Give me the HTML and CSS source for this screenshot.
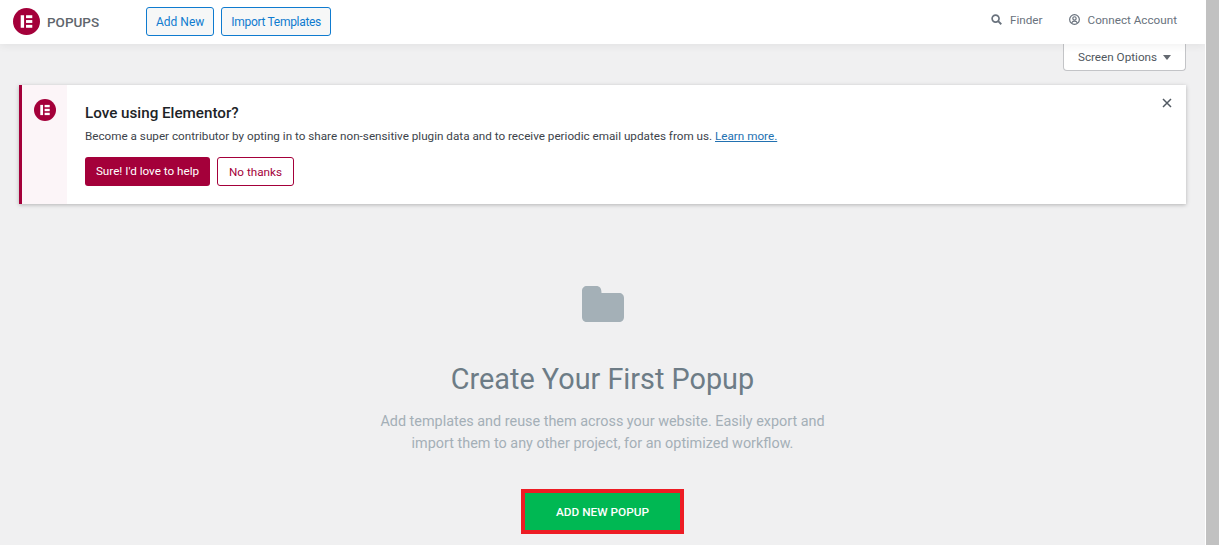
FILE: index.html
```html
<!DOCTYPE html>
<html lang="en">
<head>
    <meta charset="UTF-8">
    <meta name="viewport" content="width=device-width, initial-scale=1.0">
    <title>Popups</title>
    <link rel="stylesheet" href="styles.css">
</head>
<body>
    <div class="page">
        <div class="top-bar">
            <div class="brand">
                <svg class="brand-logo" viewBox="0 0 28 28">
                    <circle cx="14" cy="14" r="14" fill="#a4003a"/>
                    <rect x="8" y="7.500" width="3.500" height="13" fill="#fff"/>
                    <rect x="13.500" y="7.500" width="6.500" height="3" fill="#fff"/>
                    <rect x="13.500" y="12.500" width="6.500" height="3" fill="#fff"/>
                    <rect x="13.500" y="17.500" width="6.500" height="3" fill="#fff"/>
                </svg>
                <span class="brand-name">POPUPS</span>
            </div>
            <div class="top-actions">
                <a class="outline-button">Add New</a>
                <a class="outline-button tight">Import Templates</a>
            </div>
            <div class="top-links">
                <a class="top-link">
                    <svg class="top-icon" viewBox="0 0 12 12">
                        <circle cx="5" cy="5" r="3.800" fill="none" stroke="#69727d" stroke-width="1.800"/>
                        <line x1="7.800" y1="7.800" x2="11.200" y2="11.200" stroke="#69727d" stroke-width="2"/>
                    </svg>
                    Finder
                </a>
                <a class="top-link">
                    <svg class="top-icon" viewBox="0 0 12 12">
                        <circle cx="6" cy="6" r="5.300" fill="none" stroke="#69727d" stroke-width="1.300"/>
                        <circle cx="6" cy="4.800" r="1.800" fill="none" stroke="#69727d" stroke-width="1.300"/>
                        <path d="M2.900 9.800c.7-1.500 1.800-2 3.100-2s2.400.5 3.100 2" fill="none" stroke="#69727d" stroke-width="1.300"/>
                    </svg>
                    Connect Account
                </a>
            </div>
        </div>

        <div class="screen-options-row">
            <div class="screen-options">Screen Options <span class="caret"></span></div>
        </div>

        <div class="notice">
            <div class="notice-aside">
                <svg class="notice-logo" viewBox="0 0 28 28">
                    <circle cx="14" cy="14" r="14" fill="#a4003a"/>
                    <rect x="8" y="7.500" width="3.500" height="13" fill="#fff"/>
                    <rect x="13.500" y="7.500" width="6.500" height="3" fill="#fff"/>
                    <rect x="13.500" y="12.500" width="6.500" height="3" fill="#fff"/>
                    <rect x="13.500" y="17.500" width="6.500" height="3" fill="#fff"/>
                </svg>
            </div>
            <div class="notice-body">
                <h3 class="notice-title">Love using Elementor?</h3>
                <p class="notice-text">Become a super contributor by opting in to share non-sensitive plugin data and to receive periodic email updates from us. <a class="notice-link">Learn more.</a></p>
                <div class="notice-actions">
                    <a class="notice-button primary">Sure! I'd love to help</a>
                    <a class="notice-button secondary">No thanks</a>
                </div>
            </div>
            <svg class="notice-close" viewBox="0 0 10 10">
                <path d="M1 1l8 8M9 1l-8 8" stroke="#515962" stroke-width="1.500" fill="none"/>
            </svg>
        </div>

        <div class="blank-state">
            <svg class="blank-icon" viewBox="0 0 42 36">
                <path d="M5 0h9c4 0 5.500 2.500 5.500 7H37c3 0 5 2 5 5v19c0 3-2 5-5 5H5c-3 0-5-2-5-5V5c0-3 2-5 5-5z" fill="#a4b0b7"/>
            </svg>
            <h2 class="blank-title">Create Your First Popup</h2>
            <p class="blank-text">Add templates and reuse them across your website. Easily export and import them to any other project, for an optimized workflow.</p>
            <a class="add-popup">ADD NEW POPUP</a>
        </div>
    </div>
    <div class="scroll-track"></div>
</body>
</html>
```

FILE: styles.css
```css
* {
    margin: 0;
    padding: 0;
    box-sizing: border-box;
    font-family: 'Roboto', sans-serif;
}

body {
    height: 100vh;
    overflow: hidden;
    display: flex;
    background-color: #fff;
}

.page {
    width: 1205px;
    height: 545px;
    overflow: hidden;
    background-color: #f0f0f1;
}

/* Top bar */
.top-bar {
    height: 44px;
    display: flex;
    align-items: center;
    background-color: #fff;
    box-shadow: 0 2px 8px rgba(0, 0, 0, 0.06);
    position: relative;
    z-index: 2;
    padding: 0 28px 1px 13px;
}

.brand {
    display: flex;
    align-items: center;
    gap: 7px;
    width: 133px;
}

.brand-logo {
    width: 27px;
    height: 27px;
}

.brand-name {
    font-size: 13.500px;
    font-weight: 500;
    color: #5f666d;
}

.top-actions {
    display: flex;
    gap: 7px;
}

.outline-button {
    height: 29px;
    padding: 0 9px;
    display: flex;
    align-items: center;
    font-size: 12px;
    color: #0f7bcf;
    background-color: #f6f7f7;
    border: 1px solid #0f7bcf;
    border-radius: 3px;
}

.outline-button.tight {
    letter-spacing: -0.3px;
}

.top-links {
    margin-left: auto;
    display: flex;
    gap: 26px;
    padding-bottom: 4px;
}

.top-link {
    display: flex;
    align-items: center;
    gap: 8px;
    font-size: 11.700px;
    color: #69727d;
}

.top-icon {
    width: 11px;
    height: 11px;
}

/* Screen options */
.screen-options-row {
    display: flex;
    justify-content: flex-end;
    padding-right: 19px;
}

.screen-options {
    width: 123px;
    height: 27px;
    display: flex;
    align-items: center;
    justify-content: center;
    gap: 6px;
    font-size: 11.700px;
    color: #50575e;
    background-color: #fff;
    border: 1px solid #c3c4c7;
    border-top: none;
    border-radius: 0 0 4px 4px;
}

.caret {
    border-left: 4px solid transparent;
    border-right: 4px solid transparent;
    border-top: 5px solid #646970;
}

/* Notice */
.notice {
    margin: 14px 19px 0 19px;
    height: 119px;
    display: flex;
    position: relative;
    background-color: #fff;
    border-left: 3px solid #a4003a;
    box-shadow: 0 1px 4px rgba(0, 0, 0, 0.25);
}

.notice-aside {
    width: 45px;
    padding-top: 14px;
    display: flex;
    justify-content: center;
    align-items: flex-start;
    background-color: #fcf5f8;
}

.notice-logo {
    width: 22px;
    height: 22px;
}

.notice-body {
    padding: 18px 0 0 18px;
}

.notice-title {
    font-size: 15.200px;
    font-weight: 500;
    line-height: 20px;
    color: #1d2327;
}

.notice-text {
    margin-top: 4px;
    font-size: 11.700px;
    line-height: 18px;
    color: #3c434a;
}

.notice-link {
    color: #2271b1;
    text-decoration: underline;
}

.notice-actions {
    display: flex;
    gap: 7px;
    margin-top: 12px;
}

.notice-button {
    height: 29px;
    display: flex;
    align-items: center;
    justify-content: center;
    font-size: 11.700px;
    border-radius: 3px;
}

.notice-button.primary {
    width: 125px;
    padding-bottom: 2px;
    color: #fff;
    background-color: #a4003a;
}

.notice-button.secondary {
    width: 77px;
    color: #a4003a;
    background-color: #fff;
    border: 1px solid #a4003a;
}

.notice-close {
    position: absolute;
    top: 13px;
    right: 14px;
    width: 10px;
    height: 10px;
}

/* Blank state */
.blank-state {
    display: flex;
    flex-direction: column;
    align-items: center;
    padding-top: 82px;
}

.blank-icon {
    width: 42px;
    height: 36px;
}

.blank-title {
    margin-top: 39px;
    font-size: 28.800px;
    font-weight: 400;
    line-height: 36px;
    color: #6d7c86;
}

.blank-text {
    margin-top: 14px;
    width: 470px;
    font-size: 14.400px;
    line-height: 22px;
    text-align: center;
    color: #a4afb7;
}

.add-popup {
    margin-top: 34px;
    width: 163px;
    height: 45px;
    display: flex;
    align-items: center;
    justify-content: center;
    font-size: 11.800px;
    font-weight: 500;
    color: #fff;
    background-color: #00b853;
    border: 4px solid #ed1c24;
}

/* Scrollbar strip */
.scroll-track {
    width: 13px;
    height: 545px;
    margin-left: 1px;
    background-color: #c1c1c1;
}
```
